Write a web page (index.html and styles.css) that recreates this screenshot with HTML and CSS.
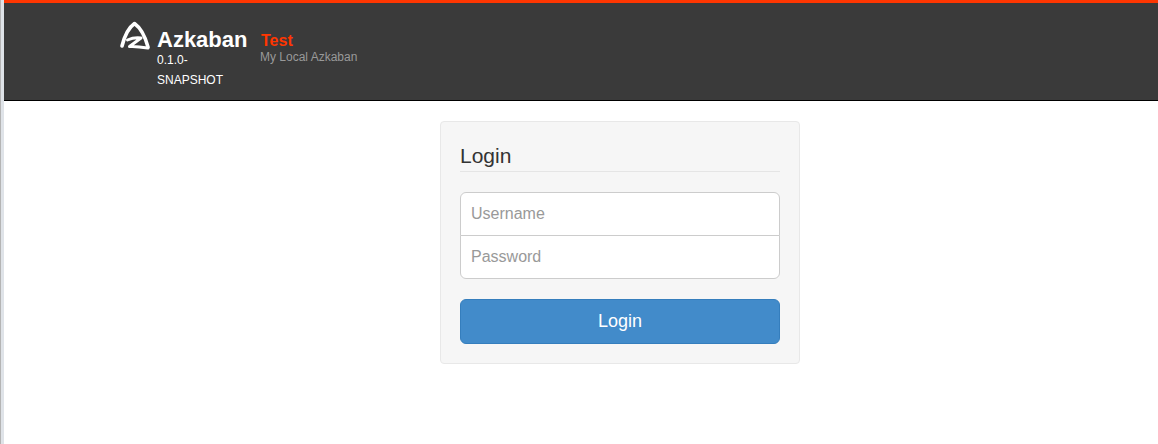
FILE: index.html
```html
<!DOCTYPE html>
<html lang="en">
<head>
<meta charset="utf-8">
<title>Azkaban Login</title>
<link rel="stylesheet" href="styles.css">
</head>
<body>
<header class="navbar">
  <div class="brand">
    <svg class="logo" width="32" height="32" viewBox="0 0 32 32" aria-hidden="true">
      <path d="M3 25 C5.5 15 10.5 6 15.5 2.5 C20.5 6 26 15 29 26" fill="none" stroke="#fff" stroke-width="3.6" stroke-linecap="round" stroke-linejoin="round"/>
      <path d="M8.5 19 C13 17 18 16.5 22 17 L10.5 25.5 C16 25 23 26 29 27" fill="none" stroke="#fff" stroke-width="3" stroke-linecap="round" stroke-linejoin="round"/>
    </svg>
    <div class="brand-text">
      <div class="brand-name">Azkaban</div>
      <div class="brand-version">0.1.0-SNAPSHOT</div>
    </div>
  </div>
  <div class="env">
    <div class="env-name">Test</div>
    <div class="env-desc">My Local Azkaban</div>
  </div>
</header>
<main class="content">
  <form class="well">
    <h3 class="well-title">Login</h3>
    <div class="fields">
      <input class="field field-top" type="text" placeholder="Username">
      <input class="field field-bottom" type="password" placeholder="Password">
    </div>
    <button class="btn" type="button">Login</button>
  </form>
</main>
</body>
</html>
```
FILE: styles.css
```css
* { box-sizing: border-box; }
html, body { height: 100%; }
body {
  margin: 0;
  padding-left: 4px;
  background: linear-gradient(to right, #b4b4b4 1px, #dfe3e8 1px, #dfe3e8 4px, #fff 4px);
  font-family: "Liberation Sans", Arial, sans-serif;
  color: #333;
  overflow: hidden;
}
.navbar {
  display: flex;
  height: 101px;
  padding-left: 115px;
  background: #3a3a3a;
  border-top: 3px solid #ff3601;
  border-bottom: 1px solid #000;
}
.brand { display: flex; width: 141px; padding-top: 18px; }
.logo { flex: none; margin-right: 6px; }
.brand-text { width: 90px; }
.brand-name {
  margin-top: 6px;
  font-size: 22px;
  font-weight: 700;
  line-height: 25px;
  color: #fff;
}
.brand-version {
  font-size: 12px;
  line-height: 20px;
  margin-top: -2px;
  color: #fff;
}
.env { padding-top: 29px; }
.env-name {
  padding-left: 1px;
  font-size: 16px;
  font-weight: 700;
  line-height: 18px;
  color: #ff3601;
}
.env-desc { font-size: 12px; line-height: 14px; color: #999; }
.content { display: flex; justify-content: center; padding: 20px 0 0 78px; }
.well {
  width: 360px;
  height: 243px;
  padding: 19px;
  background: #f6f6f6;
  border: 1px solid #e8e8e8;
  border-radius: 4px;
}
.well-title {
  margin: 0 0 20px;
  height: 31px;
  font-size: 21px;
  font-weight: 400;
  line-height: 29px;
  color: #333;
  border-bottom: 1px solid #e5e5e5;
}
.fields { display: flex; flex-direction: column; margin-bottom: 20px; }
.field {
  display: block;
  width: 100%;
  height: 44px;
  padding: 10px;
  font: 16px/22px "Liberation Sans", Arial, sans-serif;
  color: #555;
  background: #fff;
  border: 1px solid #ccc;
  outline: none;
}
.field::placeholder { color: #999; opacity: 1; }
.field-top { border-radius: 6px 6px 0 0; }
.field-bottom { margin-top: -1px; border-radius: 0 0 6px 6px; }
.btn {
  display: block;
  width: 100%;
  height: 45px;
  padding: 0 0 2px;
  font: 18px/24px "Liberation Sans", Arial, sans-serif;
  color: #fff;
  background: #428bca;
  border: 1px solid #357ebd;
  border-radius: 6px;
}
```
